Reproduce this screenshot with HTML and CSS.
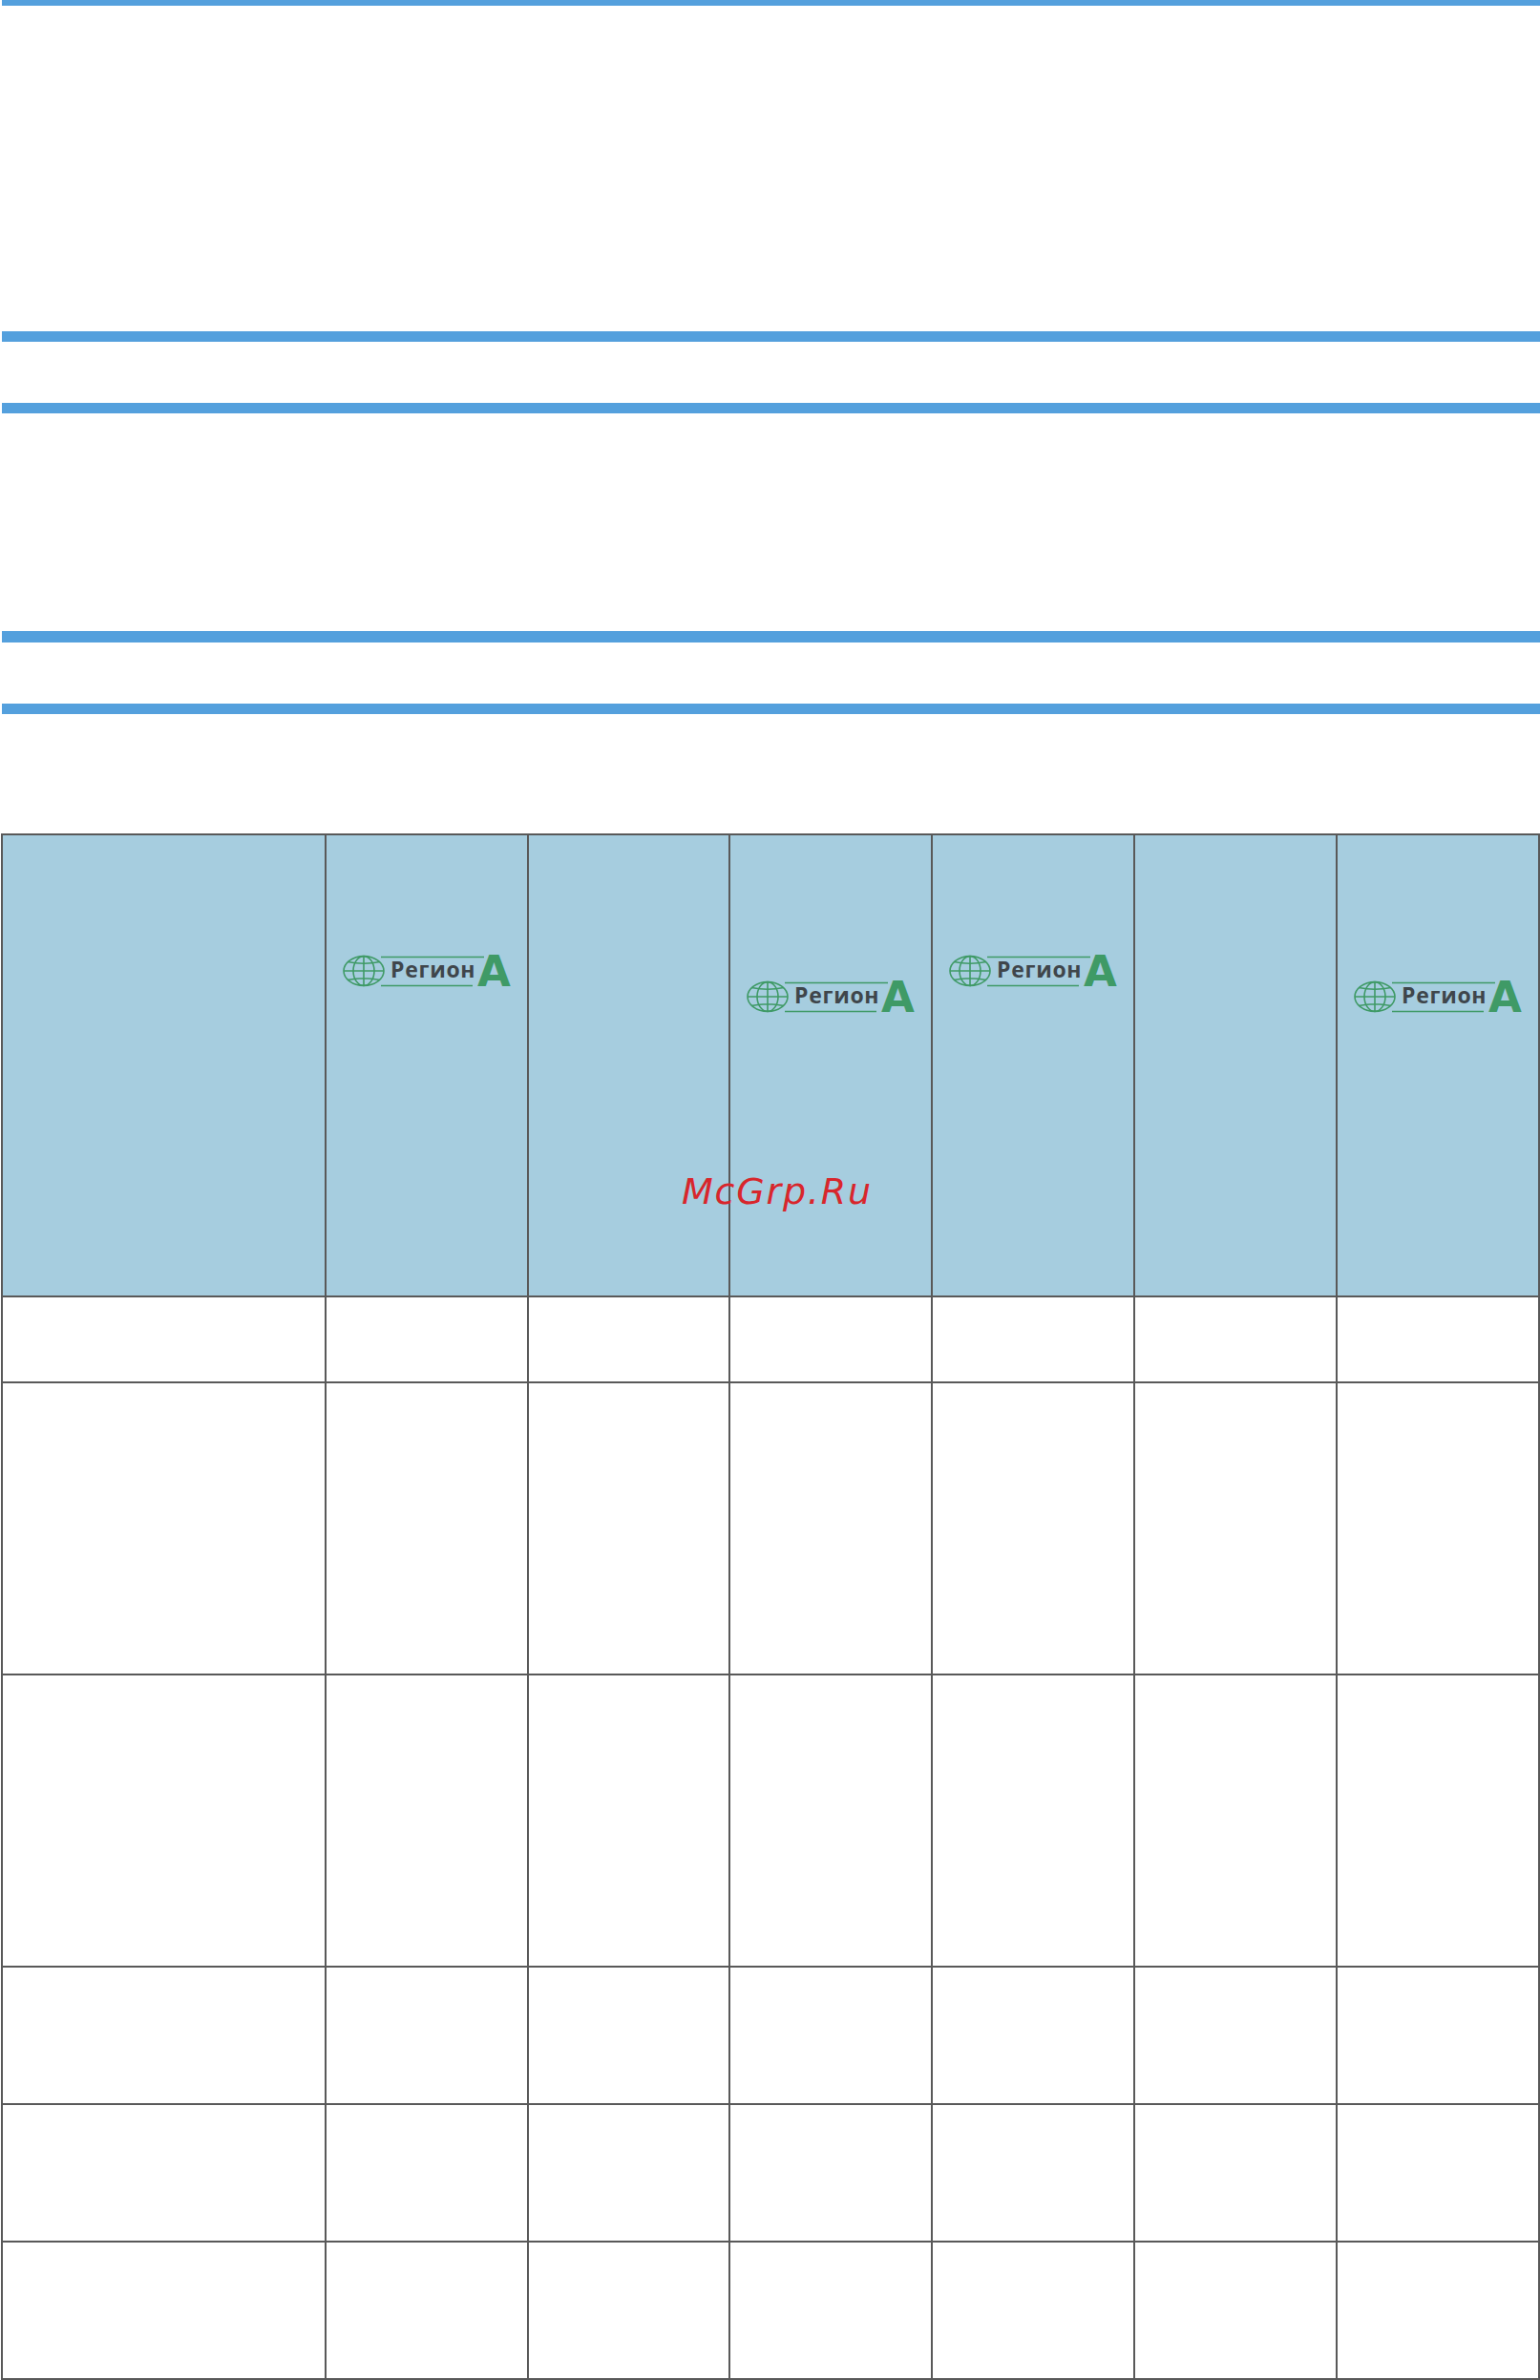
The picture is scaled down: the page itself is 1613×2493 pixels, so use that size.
FILE: index.html
```html
<!DOCTYPE html>
<html lang="ru">
<head>
<meta charset="utf-8">
<title>McGrp.Ru</title>
<link rel="stylesheet" href="styles.css">
</head>
<body>
<main class="page">
  <div class="rule rule-top"></div>
  <div class="rule rule-a"></div>
  <div class="rule rule-b"></div>
  <div class="rule rule-c"></div>
  <div class="rule rule-d"></div>
  <section class="sheet">
    <div class="cell head"></div>
    <div class="cell head logo-high">
      <svg class="logo" viewBox="0 0 177 34"><g class="globe"><ellipse cx="22" cy="16" rx="21" ry="15.4"/><ellipse cx="22" cy="16" rx="11" ry="15.4"/><path d="M22 .6V31.4M1 16H43M5 6.5Q22 10 39 6.5M5 25.5Q22 22 39 25.5"/><path d="M40 1.5H148M40 31.5H136"/></g><text class="logo-word" x="50" y="22.5">Регион</text><text class="logo-letter" x="141" y="32">A</text></svg>
    </div>
    <div class="cell head"></div>
    <div class="cell head logo-low">
      <svg class="logo" viewBox="0 0 177 34"><g class="globe"><ellipse cx="22" cy="16" rx="21" ry="15.4"/><ellipse cx="22" cy="16" rx="11" ry="15.4"/><path d="M22 .6V31.4M1 16H43M5 6.5Q22 10 39 6.5M5 25.5Q22 22 39 25.5"/><path d="M40 1.5H148M40 31.5H136"/></g><text class="logo-word" x="50" y="22.5">Регион</text><text class="logo-letter" x="141" y="32">A</text></svg>
    </div>
    <div class="cell head logo-high">
      <svg class="logo" viewBox="0 0 177 34"><g class="globe"><ellipse cx="22" cy="16" rx="21" ry="15.4"/><ellipse cx="22" cy="16" rx="11" ry="15.4"/><path d="M22 .6V31.4M1 16H43M5 6.5Q22 10 39 6.5M5 25.5Q22 22 39 25.5"/><path d="M40 1.5H148M40 31.5H136"/></g><text class="logo-word" x="50" y="22.5">Регион</text><text class="logo-letter" x="141" y="32">A</text></svg>
    </div>
    <div class="cell head"></div>
    <div class="cell head logo-low">
      <svg class="logo" viewBox="0 0 177 34"><g class="globe"><ellipse cx="22" cy="16" rx="21" ry="15.4"/><ellipse cx="22" cy="16" rx="11" ry="15.4"/><path d="M22 .6V31.4M1 16H43M5 6.5Q22 10 39 6.5M5 25.5Q22 22 39 25.5"/><path d="M40 1.5H148M40 31.5H136"/></g><text class="logo-word" x="50" y="22.5">Регион</text><text class="logo-letter" x="141" y="32">A</text></svg>
    </div>

    <div class="cell"></div><div class="cell"></div><div class="cell"></div><div class="cell"></div><div class="cell"></div><div class="cell"></div><div class="cell"></div>
    <div class="cell"></div><div class="cell"></div><div class="cell"></div><div class="cell"></div><div class="cell"></div><div class="cell"></div><div class="cell"></div>
    <div class="cell"></div><div class="cell"></div><div class="cell"></div><div class="cell"></div><div class="cell"></div><div class="cell"></div><div class="cell"></div>
    <div class="cell"></div><div class="cell"></div><div class="cell"></div><div class="cell"></div><div class="cell"></div><div class="cell"></div><div class="cell"></div>
    <div class="cell"></div><div class="cell"></div><div class="cell"></div><div class="cell"></div><div class="cell"></div><div class="cell"></div><div class="cell"></div>
    <div class="cell"></div><div class="cell"></div><div class="cell"></div><div class="cell"></div><div class="cell"></div><div class="cell"></div><div class="cell"></div>
  </section>
  <div class="watermark">McGrp.Ru</div>
</main>
</body>
</html>
```
FILE: styles.css
```css
html, body {
  margin: 0;
  padding: 0;
  background: #fff;
}

.page {
  position: relative;
  display: flex;
  flex-direction: column;
  width: 1613px;
  height: 2493px;
  overflow: hidden;
}

.rule {
  flex: none;
  margin-left: 2px;
  height: 11px;
  background: #54a0dd;
}

.rule-top { height: 6px; }
.rule-a { margin-top: 341px; }
.rule-b { margin-top: 64px; }
.rule-c { margin-top: 228px; height: 12px; }
.rule-d { margin-top: 64px; }

.sheet {
  flex: none;
  display: grid;
  grid-template-columns: 339px 212px 211px 212px 212px 212px 212px;
  grid-template-rows: 484px 90px 306px 306px 144px 144px 144px;
  box-sizing: border-box;
  margin: 125px 0 0 1px;
  width: 1612px;
  border-right: 2px solid #595959;
  border-bottom: 2px solid #595959;
}

.cell {
  box-sizing: border-box;
  display: flex;
  justify-content: center;
  border-left: 2px solid #595959;
  border-top: 2px solid #595959;
}

.head { background: #a6cddf; }
.logo-high { padding-top: 126px; }
.logo-low { padding-top: 153px; }

.logo {
  display: block;
  width: 177px;
  height: 34px;
  overflow: visible;
}

.globe {
  fill: none;
  stroke: #3f9a66;
  stroke-width: 1.6;
}

.logo-word {
  font-family: "Open Sans", sans-serif;
  font-weight: 700;
  font-size: 23px;
  letter-spacing: 0.7px;
  fill: #3f464b;
}

.logo-letter {
  font-family: "DejaVu Sans", sans-serif;
  font-weight: 700;
  font-size: 45px;
  fill: #3f9a66;
}

.watermark {
  position: absolute;
  left: 714px;
  top: 1226px;
  font-family: "DejaVu Sans", sans-serif;
  font-style: italic;
  font-size: 38px;
  line-height: 44px;
  letter-spacing: 1.8px;
  color: #d8262c;
}
```
